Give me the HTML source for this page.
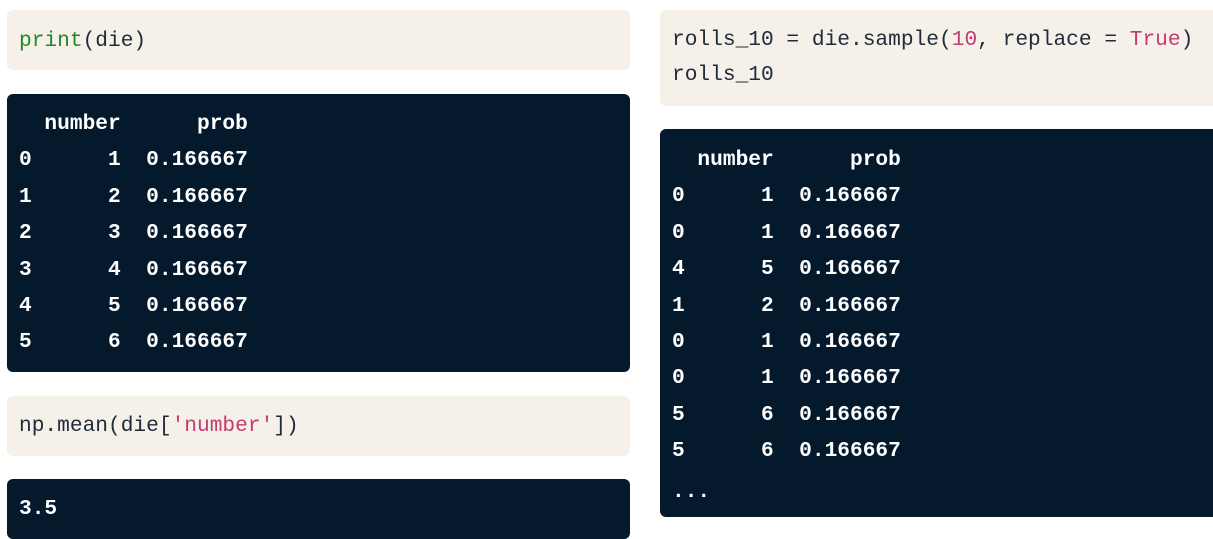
<!DOCTYPE html>
<html><head><style>
html,body{margin:0;width:1213px;height:524px;overflow:hidden;background:#fff;font-family:"Liberation Mono",monospace;font-size:21.2px;}
.b{position:absolute;border-radius:6px;white-space:pre;line-height:36.4px;box-sizing:border-box;padding-left:12px;}
.c{background:#f5f1e9;color:#1f2a3a;}
.o{background:#05192d;color:#fff;font-weight:bold;}
.g{color:#23882a}.p{color:#c43b72}
</style></head><body>
<div class="b c" style="left:7px;top:10px;width:623px;height:60px;padding-top:13px"><span class="g">print</span>(die)</div>
<div class="b o" style="left:7px;top:94px;width:623px;height:278px;padding-top:12px">  number      prob
0      1  0.166667
1      2  0.166667
2      3  0.166667
3      4  0.166667
4      5  0.166667
5      6  0.166667</div>
<div class="b c" style="left:7px;top:396px;width:623px;height:60px;padding-top:12px">np.mean(die[<span class="p">'number'</span>])</div>
<div class="b o" style="left:7px;top:479px;width:623px;height:60px;padding-top:12px">3.5</div>
<div class="b c" style="left:660px;top:10px;width:570px;height:96px;padding-top:13px;line-height:35px">rolls_10 = die.sample(<span class="p">10</span>, replace = <span class="p">True</span>)
rolls_10</div>
<div class="b o" style="left:660px;top:129px;width:570px;height:388px;padding-top:13px">  number      prob
0      1  0.166667
0      1  0.166667
4      5  0.166667
1      2  0.166667
0      1  0.166667
0      1  0.166667
5      6  0.166667
5      6  0.166667
<span style="line-height:44px">...</span></div>
</body></html>
